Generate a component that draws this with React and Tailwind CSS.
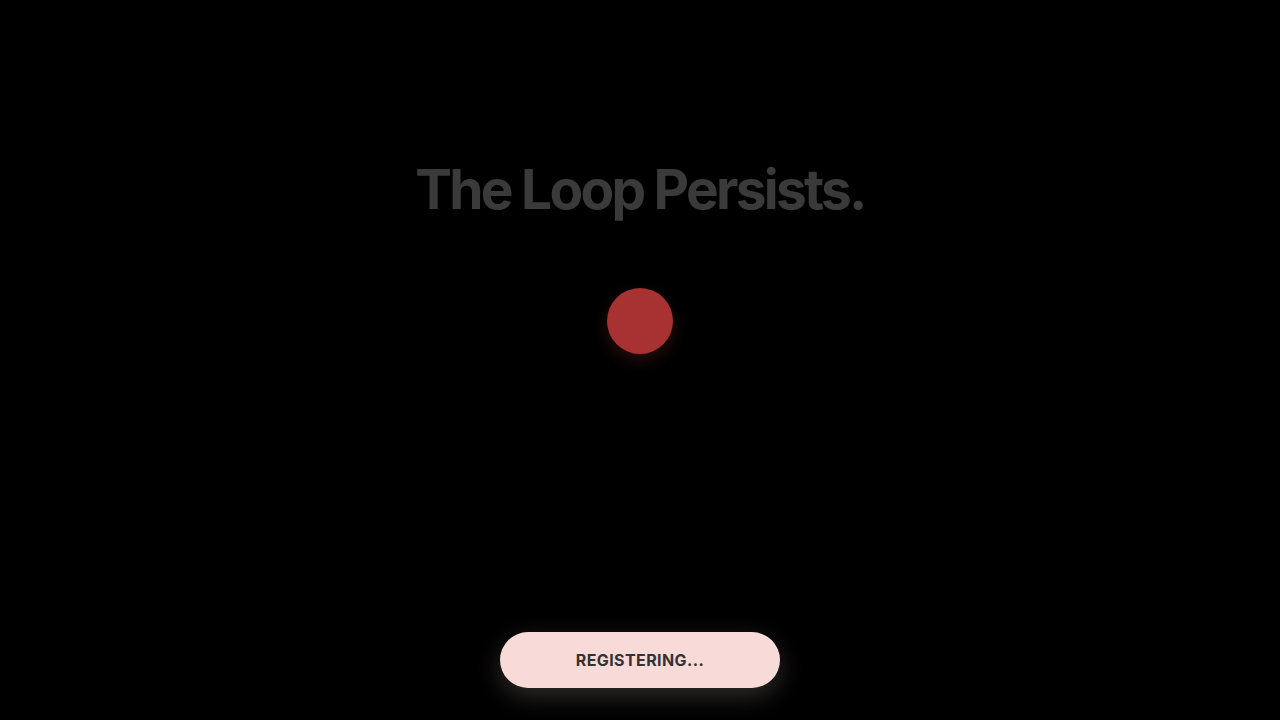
import React from 'react';

const App = () => {
  return (
    <div
      className="h-screen w-full bg-black flex flex-col items-center overflow-hidden"
      style={{ fontFamily: 'Inter, "Liberation Sans", sans-serif' }}
    >
      <h1 className="mt-[162px] text-[55px] leading-none font-bold tracking-[-0.05em] text-[#3a3a3a]">
        The Loop Persists.
      </h1>

      <div className="mt-[71px] w-[66px] h-[66px] rounded-full bg-[#a83232] shadow-[0_6px_16px_rgba(168,50,50,0.25)]" />

      <button className="mt-auto mb-8 w-[280px] h-14 rounded-full bg-[#f8dad9] text-[#333333] text-base font-bold tracking-wide shadow-[0_8px_24px_rgba(248,218,217,0.2)]">
        REGISTERING...
      </button>
    </div>
  );
};

export default App;
